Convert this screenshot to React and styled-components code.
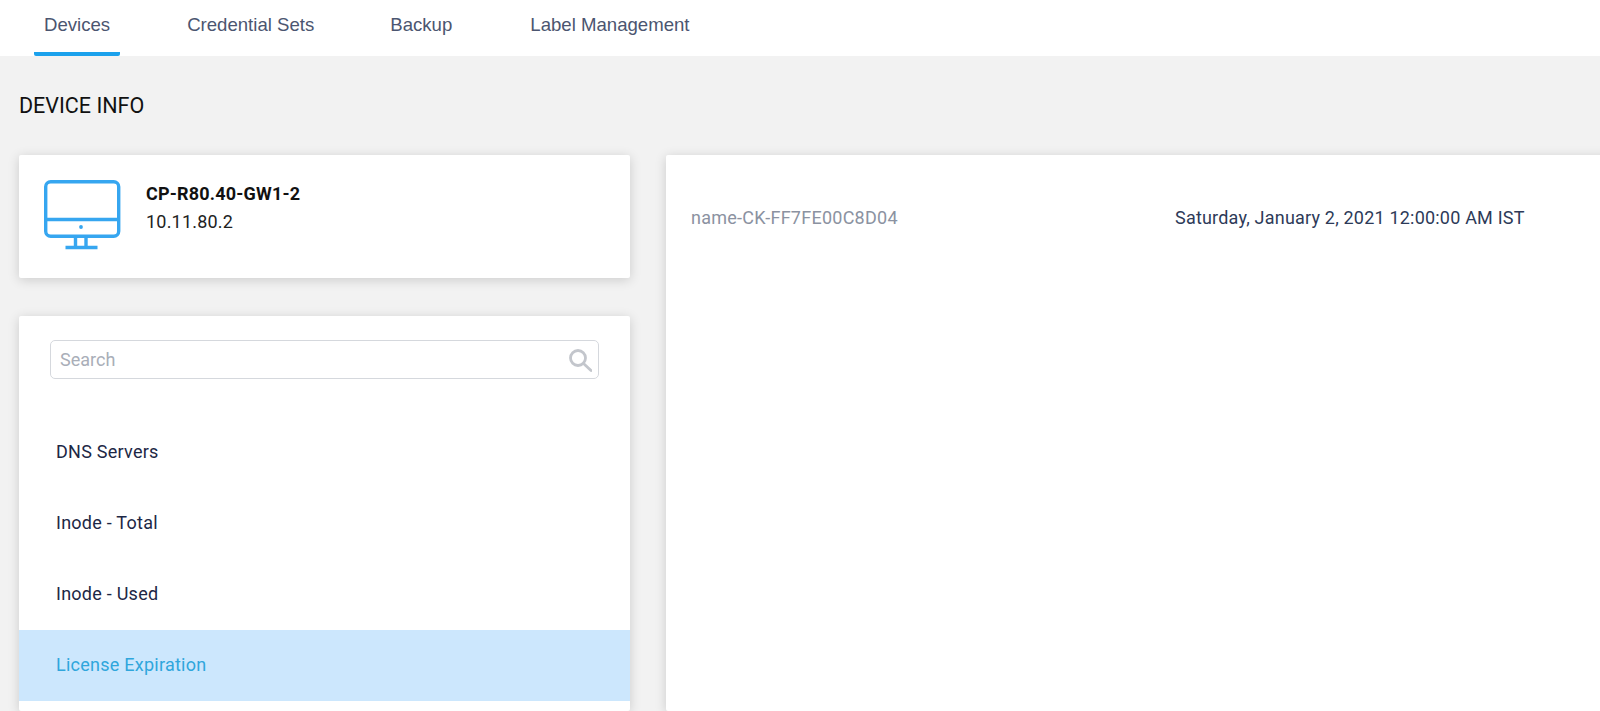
import React from "react";
import styled, { createGlobalStyle } from "styled-components";

const Global = createGlobalStyle`
  html, body { margin: 0; padding: 0; height: 711px; overflow: hidden; background: #f2f2f2; }
  body { font-family: Roboto, "Liberation Sans", sans-serif; }
  * { box-sizing: border-box; }
`;
const Page = styled.div`height: 711px; overflow: hidden; display: flex; flex-direction: column;`;
const TabBar = styled.nav`
  flex: none; height: 56px; background: #fff; display: flex; padding-left: 34px;
`;
const Tab = styled.div`
  height: 56px; padding: 0 10px; margin-right: ${p => p.$gap}px;
  font: 18.6px/49px "Liberation Sans", sans-serif; color: #4b5570;
  border-bottom: 4px solid ${p => (p.$active ? "#1ba1ec" : "transparent")};
  border-radius: 0 0 2px 2px;
`;
const Main = styled.main`flex: 1; min-height: 0; padding: 0 0 0 19px; display: flex; flex-direction: column;`;
const Heading = styled.h1`
  margin: 0; height: 99px; padding-top: 38px; font: 400 21.5px/24px Roboto, sans-serif; color: #111;
`;
const Columns = styled.div`flex: 1; min-height: 0; display: flex; gap: 36px; margin-right: -20px;`;
const Left = styled.div`flex: none; width: 611px; display: flex; flex-direction: column; gap: 38px;`;
const Card = styled.section`
  background: #fff; border-radius: 2px; box-shadow: 0 2px 12px rgba(0, 0, 0, 0.16);
`;
const DeviceCard = styled(Card)`
  flex: none; height: 123px; display: flex; padding: 25px 0 0 25px; gap: 24px;
`;
const DeviceName = styled.div`font: 700 18px/20px Roboto, sans-serif; color: #111; margin-top: 4px; letter-spacing: .2px;`;
const DeviceIp = styled.div`font: 400 18px/20px Roboto, sans-serif; color: #222; margin-top: 8px; letter-spacing: .2px;`;
const ListCard = styled(Card)`flex: 1; min-height: 0; padding-top: 24px; overflow: hidden;`;
const Search = styled.div`
  height: 39px; margin: 0 31px; border: 1px solid #d5d8dd; border-radius: 5px;
  display: flex; align-items: center; justify-content: space-between; padding: 0 6px 0 9px;
  font: 18px Roboto, sans-serif; color: #a9aeb8;
`;
const List = styled.ul`list-style: none; margin: 38px 0 0; padding: 0;`;
const Item = styled.li`
  height: 71px; padding: 0 0 3px 37px; display: flex; align-items: center;
  font: 400 18px Roboto, sans-serif; letter-spacing: .25px;
  color: ${p => (p.$active ? "#2fa6dc" : "#1d2745")};
  background: ${p => (p.$active ? "#cce7fd" : "transparent")};
`;
const Detail = styled(Card)`flex: 1; padding: 52px 0 0 25px; display: flex; align-items: flex-start;`;
const Name = styled.div`flex: none; width: 484px; font: 400 18px/22px Roboto, sans-serif; color: #8b92a1; letter-spacing: .25px;`;
const Value = styled.div`font: 400 18px/22px Roboto, sans-serif; color: #2d3a58; letter-spacing: .2px;`;

const Monitor = () => (
  <svg width="78" height="70" viewBox="0 0 78 70" fill="none" stroke="#36a6f0" strokeWidth="3.4">
    <rect x="1.7" y="1.7" width="73" height="54.6" rx="5" />
    <path d="M1.7 39.5h73" />
    <path d="M31.5 56v12M42 56v12" />
    <path d="M21.5 67.5h32" strokeWidth="3.6" />
    <circle cx="37" cy="47" r="1.9" fill="#36a6f0" stroke="none" />
  </svg>
);
const SearchIcon = () => (
  <svg width="24" height="24" viewBox="0 0 24 24" fill="none" stroke="#c3c6cc" strokeWidth="2.8">
    <circle cx="10" cy="10" r="7.5" />
    <path d="M15.5 15.5 23 22.5" strokeLinecap="round" />
  </svg>
);

export default function App() {
  return (
    <Page>
      <Global />
      <TabBar>
        <Tab $active $gap={57}>Devices</Tab>
        <Tab $gap={56}>Credential Sets</Tab>
        <Tab $gap={58}>Backup</Tab>
        <Tab $gap={0}>Label Management</Tab>
      </TabBar>
      <Main>
        <Heading>DEVICE INFO</Heading>
        <Columns>
          <Left>
            <DeviceCard>
              <Monitor />
              <div>
                <DeviceName>CP-R80.40-GW1-2</DeviceName>
                <DeviceIp>10.11.80.2</DeviceIp>
              </div>
            </DeviceCard>
            <ListCard>
              <Search>Search<SearchIcon /></Search>
              <List>
                <Item>DNS Servers</Item>
                <Item>Inode - Total</Item>
                <Item>Inode - Used</Item>
                <Item $active>License Expiration</Item>
              </List>
            </ListCard>
          </Left>
          <Detail>
            <Name>name-CK-FF7FE00C8D04</Name>
            <Value>Saturday, January 2, 2021 12:00:00 AM IST</Value>
          </Detail>
        </Columns>
      </Main>
    </Page>
  );
}
